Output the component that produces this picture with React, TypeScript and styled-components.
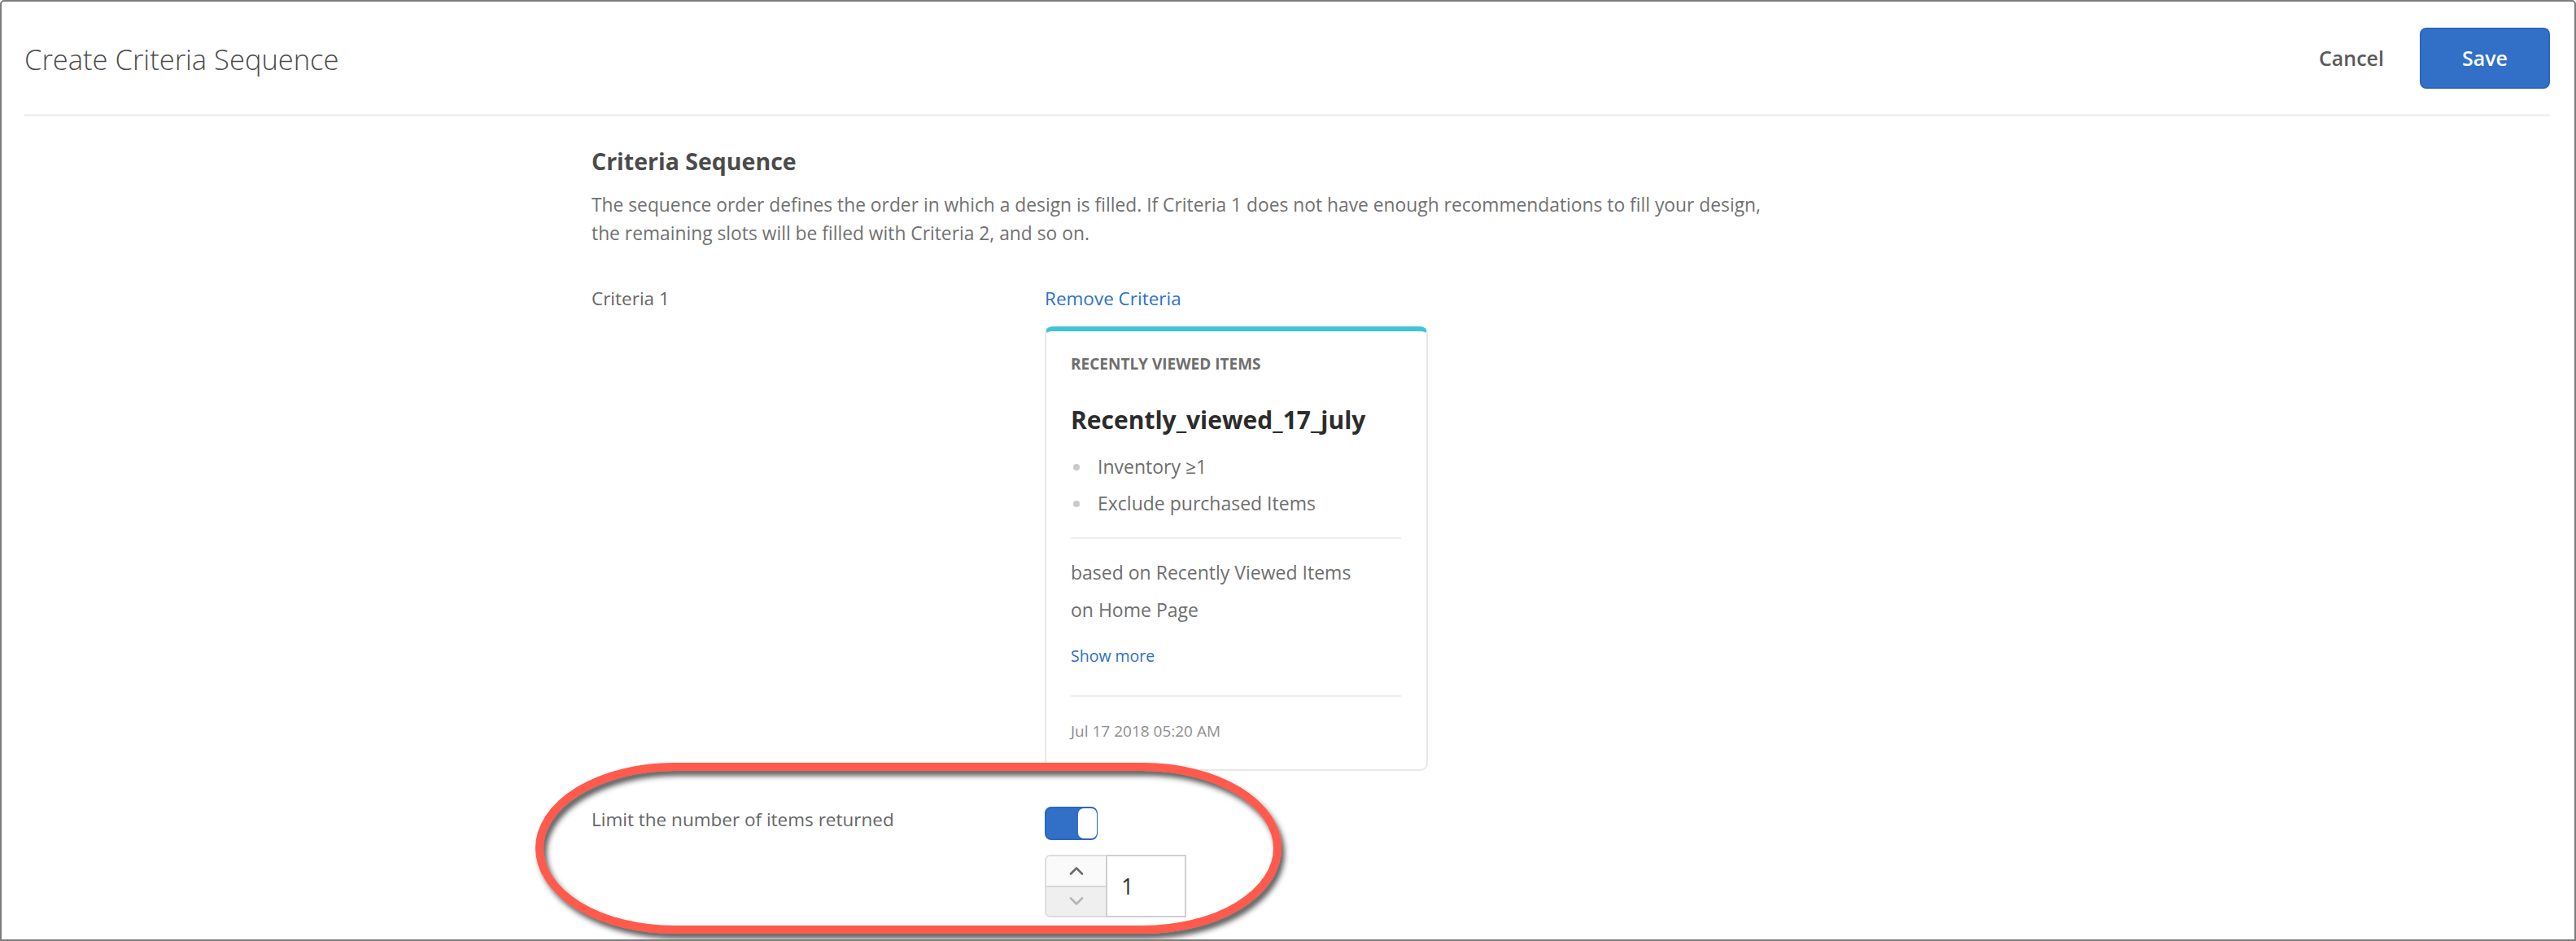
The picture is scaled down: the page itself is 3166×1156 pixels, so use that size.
import React from "react";
import styled, { createGlobalStyle } from "styled-components";

const GlobalStyle = createGlobalStyle`
  html, body { margin: 0; padding: 0; background: #ffffff; }
  body { font-family: "Open Sans", "Noto Sans", sans-serif; }
  * { box-sizing: border-box; }
`;

const Frame = styled.div`
  position: relative;
  width: 3166px;
  height: 1156px;
  border: 2px solid #7d7d7d;
  border-radius: 5px 5px 0 0;
  background: #ffffff;
  overflow: hidden;
  font-family: "Open Sans", "Noto Sans", sans-serif;
`;

const Header = styled.header`
  margin: 0 30px 0 28px;
  height: 141px;
  display: flex;
  align-items: center;
  justify-content: space-between;
  border-bottom: 3px solid #f1f1f1;
`;

const Title = styled.h1`
  margin: 2px 0 0 0;
  font-size: 34.5px;
  font-weight: 300;
  color: #4b4b4b;
`;

const Actions = styled.div`
  display: flex;
  align-items: center;
  gap: 44px;
`;

const Button = styled.button<{ $primary?: boolean }>`
  font-family: inherit;
  font-size: 25px;
  font-weight: 600;
  cursor: pointer;
  border-radius: 8px;
  ${(p) =>
    p.$primary
      ? `
    width: 160px;
    height: 75px;
    background: #3270c8;
    border: 2px solid #2a65bf;
    color: #ffffff;
  `
      : `
    background: transparent;
    border: none;
    padding: 0;
    color: #5a5a5a;
  `}
`;

const Content = styled.main`
  margin-left: 725px;
  width: 1560px;
`;

const Heading = styled.h2`
  margin: 35px 0 0 0;
  font-size: 28.5px;
  line-height: 40px;
  font-weight: 700;
  color: #4b4b4b;
`;

const Description = styled.p`
  margin: 16px 0 0 0;
  font-size: 22.8px;
  line-height: 35px;
  color: #717171;
`;

const FieldRow = styled.div<{ $gap: number }>`
  display: grid;
  grid-template-columns: 557px 1fr;
  margin-top: ${(p) => p.$gap}px;
`;

const FieldLabel = styled.div<{ $lh: number }>`
  font-size: 22.5px;
  line-height: ${(p) => p.$lh}px;
  color: #666666;
`;

const FieldBody = styled.div`
  display: flex;
  flex-direction: column;
  align-items: flex-start;
`;

const Link = styled.a<{ $size: number; $lh: number }>`
  font-size: ${(p) => p.$size}px;
  line-height: ${(p) => p.$lh}px;
  color: #2d6fcb;
  text-decoration: none;
  cursor: pointer;
`;

const Card = styled.div`
  margin-top: 17px;
  width: 471px;
  border: 2px solid #e8e8e8;
  border-top: 6px solid #43c3d8;
  border-radius: 9px;
  padding: 27px 31px 30px 30px;
`;

const Kicker = styled.div`
  font-size: 19px;
  line-height: 26px;
  font-weight: 700;
  color: #6e6e6e;
  text-transform: uppercase;
`;

const CardTitle = styled.div`
  margin-top: 34px;
  font-size: 30px;
  line-height: 44px;
  font-weight: 700;
  color: #2c2c2c;
`;

const RuleList = styled.ul`
  list-style: none;
  margin: 13px 0 0 0;
  padding: 0;
`;

const RuleItem = styled.li`
  position: relative;
  padding-left: 33px;
  font-size: 23px;
  line-height: 45px;
  color: #6e6e6e;
  &::before {
    content: "";
    position: absolute;
    left: 3px;
    top: 19px;
    width: 8px;
    height: 8px;
    border-radius: 50%;
    background: #c9c9c9;
  }
`;

const CardDivider = styled.hr<{ $top: number; $bottom: number }>`
  margin: ${(p) => p.$top}px 0 ${(p) => p.$bottom}px 0;
  border: none;
  height: 2px;
  background: #efefef;
`;

const CardText = styled.div`
  font-size: 23px;
  line-height: 46px;
  color: #6e6e6e;
`;

const ShowMoreWrap = styled.div`
  margin-top: 17px;
`;

const DateText = styled.div`
  font-size: 19px;
  line-height: 34px;
  color: #8e8e8e;
`;

const Toggle = styled.div`
  width: 65px;
  height: 41px;
  border-radius: 8px;
  background: #3270c8;
  border: 2px solid #2b66c0;
  display: flex;
  justify-content: flex-end;
`;

const Knob = styled.div`
  width: 23px;
  height: 100%;
  background: #ffffff;
  border-radius: 7px;
  margin-right: -1px;
`;

const Stepper = styled.div`
  margin-top: 18px;
  display: flex;
  width: 174px;
  height: 77px;
`;

const StepButtons = styled.div`
  width: 75px;
  display: flex;
  flex-direction: column;
  border: 2px solid #dddddd;
  border-right: none;
  border-radius: 7px 0 0 7px;
  overflow: hidden;
`;

const StepButton = styled.div<{ $down?: boolean }>`
  flex: 1;
  display: flex;
  align-items: center;
  justify-content: center;
  background: ${(p) => (p.$down ? "#efefef" : "#fafafa")};
  border-top: ${(p) => (p.$down ? "2px solid #d6d6d6" : "none")};
  color: ${(p) => (p.$down ? "#b5b5b5" : "#6b6b6b")};
`;

const NumberField = styled.div`
  flex: 1;
  border: 2px solid #cfcfcf;
  display: flex;
  align-items: center;
  padding-left: 17px;
  font-size: 27px;
  color: #323232;
`;

const Annotation = styled.svg`
  position: absolute;
  left: 650px;
  top: 929px;
  pointer-events: none;
`;

const Chevron = ({ up }: { up?: boolean }) => (
  <svg width="18" height="11" viewBox="0 0 18 11">
    <path
      d={up ? "M2 9.5 L9 2.5 L16 9.5" : "M2 1.5 L9 8.5 L16 1.5"}
      fill="none"
      stroke="currentColor"
      strokeWidth="2.6"
      strokeLinecap="round"
      strokeLinejoin="round"
    />
  </svg>
);

export default function App() {
  return (
    <>
      <GlobalStyle />
      <Frame>
        <Header>
          <Title>Create Criteria Sequence</Title>
          <Actions>
            <Button>Cancel</Button>
            <Button $primary>Save</Button>
          </Actions>
        </Header>
        <Content>
          <Heading>Criteria Sequence</Heading>
          <Description>
            The sequence order defines the order in which a design is filled. If Criteria 1 does not have enough
            recommendations to fill your design,
            <br />
            the remaining slots will be filled with Criteria 2, and so on.
          </Description>
          <FieldRow $gap={45}>
            <FieldLabel $lh={35}>Criteria 1</FieldLabel>
            <FieldBody>
              <Link $size={22.5} $lh={35}>Remove Criteria</Link>
              <Card>
                <Kicker>Recently Viewed Items</Kicker>
                <CardTitle>Recently_viewed_17_july</CardTitle>
                <RuleList>
                  <RuleItem>Inventory ≥1</RuleItem>
                  <RuleItem>Exclude purchased Items</RuleItem>
                </RuleList>
                <CardDivider $top={19} $bottom={18} />
                <CardText>based on Recently Viewed Items</CardText>
                <CardText>on Home Page</CardText>
                <ShowMoreWrap>
                  <Link $size={19.5} $lh={34}>Show more</Link>
                </ShowMoreWrap>
                <CardDivider $top={31} $bottom={25} />
                <DateText>Jul 17 2018 05:20 AM</DateText>
              </Card>
            </FieldBody>
          </FieldRow>
          <FieldRow $gap={44}>
            <FieldLabel $lh={32}>Limit the number of items returned</FieldLabel>
            <FieldBody>
              <Toggle>
                <Knob />
              </Toggle>
              <Stepper>
                <StepButtons>
                  <StepButton>
                    <Chevron up />
                  </StepButton>
                  <StepButton $down>
                    <Chevron />
                  </StepButton>
                </StepButtons>
                <NumberField>1</NumberField>
              </Stepper>
            </FieldBody>
          </FieldRow>
        </Content>
        <Annotation width="940" height="235" viewBox="0 0 940 235">
          <defs>
            <filter id="annShadow" x="-5%" y="-10%" width="115%" height="130%">
              <feDropShadow dx="4" dy="6" stdDeviation="3" floodColor="#2a2a2a" floodOpacity="0.75" />
            </filter>
          </defs>
          <rect
            x="11"
            y="11"
            width="907"
            height="200"
            rx="165"
            ry="100"
            fill="none"
            stroke="#ff5a4b"
            strokeWidth="10"
            filter="url(#annShadow)"
          />
        </Annotation>
      </Frame>
    </>
  );
}
